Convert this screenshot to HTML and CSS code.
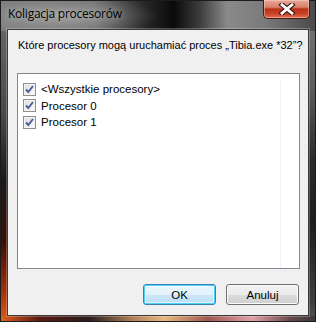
FILE: index.html
```html
<!DOCTYPE html>
<html lang="pl">
<head>
<meta charset="utf-8">
<title>Koligacja procesorów</title>
<link rel="stylesheet" href="styles.css">
</head>
<body>
<div class="window">
  <div class="titlebar">
    <span class="title">Koligacja procesorów</span>
    <button class="close" aria-label="Zamknij">
      <svg width="18" height="12" viewBox="0 0 18 12">
        <path d="M4 1.8 L14 10.2 M14 1.8 L4 10.2" stroke="#3a1a14" stroke-width="5" stroke-linecap="square" fill="none"/>
        <path d="M4 1.8 L14 10.2 M14 1.8 L4 10.2" stroke="#ffffff" stroke-width="2.8" stroke-linecap="square" fill="none"/>
      </svg>
    </button>
  </div>
  <div class="client">
    <p class="question">Które procesory mogą uruchamiać proces „Tibia.exe *32”?</p>
    <div class="listbox">
      <div class="list-col">
        <label class="item"><span class="check"></span><span class="text">&lt;Wszystkie procesory&gt;</span></label>
        <label class="item"><span class="check"></span><span class="text">Procesor 0</span></label>
        <label class="item"><span class="check"></span><span class="text">Procesor 1</span></label>
      </div>
    </div>
    <div class="buttons">
      <button class="btn default">OK</button>
      <button class="btn">Anuluj</button>
    </div>
  </div>
</div>
</body>
</html>
```
FILE: styles.css
```css
* { box-sizing: border-box; }
html, body { margin: 0; padding: 0; }
body { width: 316px; height: 322px; overflow: hidden; background: #000; }

.window {
  width: 316px;
  height: 322px;
  display: flex;
  flex-direction: column;
  border: 1px solid #1c1c1c;
  background:
    radial-gradient(ellipse 95px 22px at 62px 15px, rgba(190,190,190,0.55), rgba(190,190,190,0) 100%),
    linear-gradient(to right, #e0601c 0%, #5a1a10 12%, #2a1c1c 28%, #b08058 42%, #e8b880 52%, #a05850 66%, #e0a0a8 80%, #6a4a4a 92%, #3a3a3a 100%) left bottom / 100% 5px no-repeat,
    linear-gradient(to right, #7a7a7a 0%, #6c6c6c 30%, #2a2a2a 45%, #0a0a0a 55%, #3a3a3a 63%, #8a8a8a 72%, #7a7a7a 84%, #4a4a4a 100%) left top / 100% 30px no-repeat,
    linear-gradient(to bottom, #6e6e6e 0, #4a4a4a 110px, #1a1a1a 180px, #3a0e06 240px, #a0300c 290px, #e06018 322px) left top / 50% 100% no-repeat,
    linear-gradient(to bottom, #7a7a7a 0, #5a5a5a 90px, #2a2a2a 160px, #1e1e1e 220px, #3e3e3e 300px, #555 322px) right top / 50% 100% no-repeat;
}

.titlebar {
  height: 28px;
  display: flex;
  align-items: flex-start;
  padding-left: 7px;
  padding-right: 5px;
  flex: none;
}
.title {
  margin-top: 4px;
  font-family: "Open Sans", "Noto Sans", sans-serif;
  font-size: 12px;
  color: #000;
  letter-spacing: -0.25px;
  text-shadow: 0 0 6px rgba(255,255,255,0.5);
  flex: 1;
}
.close {
  width: 47px;
  height: 19px;
  margin-top: -1px;
  padding: 0;
  border: 1px solid #4a1810;
  border-top: none;
  border-radius: 0 0 5px 5px;
  background: linear-gradient(to bottom, #e8a898 0%, #d8806c 40%, #b83018 50%, #c84028 75%, #e07050 100%);
  box-shadow: inset 0 0 0 1px rgba(255,220,210,0.45);
  display: flex;
  align-items: center;
  justify-content: center;
}

.client {
  flex: 1;
  margin: 0 6px 5px 6px;
  background: #f0f0f0;
  border: 1px solid #3a3a3a;
  box-shadow: 0 0 0 1px rgba(255,255,255,0.25);
  padding: 5px 8px 0 9px;
  display: flex;
  flex-direction: column;
  font-family: "Liberation Sans", Arial, sans-serif;
  font-size: 11px;
  color: #000;
}
.question {
  margin: 0;
  height: 38px;
  line-height: 15px;
  padding-top: 3px;
  padding-left: 1px;
  white-space: nowrap;
}
.listbox {
  height: 196px;
  background: #fff;
  border: 1px solid #828790;
  padding: 7px 0 0 5px;
}
.list-col {
  width: 258px;
  height: 100%;
  border-right: 1px solid #eef3fb;
}
.item {
  display: flex;
  align-items: center;
  height: 16.5px;
}
.check {
  width: 13px;
  height: 13px;
  border: 1px solid #8e8f8f;
  background:
    url("data:image/svg+xml;utf8,<svg xmlns='http://www.w3.org/2000/svg' width='11' height='11' viewBox='0 0 11 11'><path d='M2 5.5 L4.3 8 L9 2' stroke='%234a5f97' stroke-width='1.9' fill='none'/></svg>") center / 11px 11px no-repeat,
    linear-gradient(135deg, #dcdcdc, #fbfbfb);
  box-shadow: inset 0 0 0 1px #f4f4f4;
  flex: none;
}
.text {
  margin-left: 4px;
  padding: 0 1px;
  line-height: 14px;
  font-size: 11.5px;
}

.buttons {
  display: flex;
  justify-content: flex-end;
  gap: 10px;
  margin-top: 15px;
  padding-right: 1px;
}
.btn {
  width: 73px;
  height: 21px;
  padding: 0;
  font-family: "Liberation Sans", Arial, sans-serif;
  font-size: 11.5px;
  color: #000;
  border: 1px solid #707070;
  border-radius: 3px;
  background: linear-gradient(to bottom, #f2f2f2 0%, #ebebeb 50%, #dddddd 51%, #cfcfcf 100%);
  box-shadow: inset 0 0 0 1px #fcfcfc;
}
.btn.default {
  border-color: #3c7fb1;
  box-shadow: inset 0 0 0 1px #48d3fb, inset 0 0 0 2px rgba(255,255,255,0.6);
  background: linear-gradient(to bottom, #eaf6fd 0%, #e2f1fb 50%, #cde7f8 51%, #bcdef5 100%);
}
```
